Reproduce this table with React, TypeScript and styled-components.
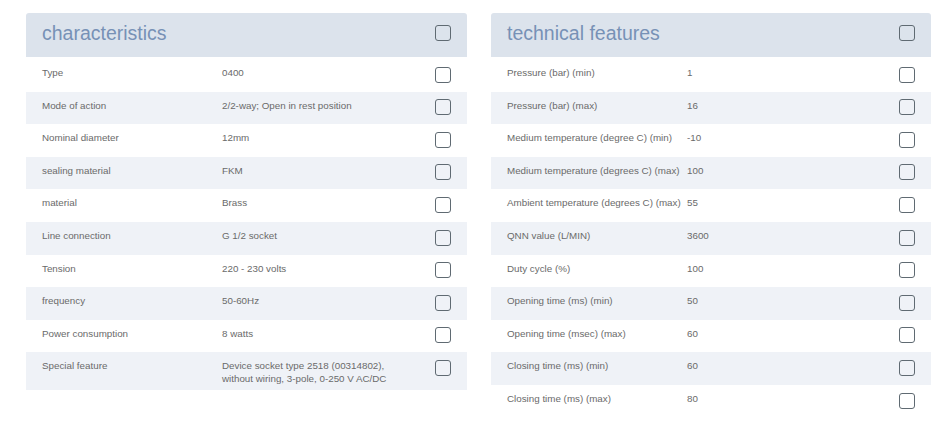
import React from "react";
import styled, { createGlobalStyle } from "styled-components";

const Global = createGlobalStyle`
  html, body { margin: 0; padding: 0; background: #ffffff; }
  body { font-family: "Liberation Sans", Arial, sans-serif; }
`;

const Page = styled.div`
  display: grid;
  grid-template-columns: 441px 440px;
  column-gap: 24px;
  align-items: start;
  padding: 13px 10px 0 26px;
`;

const Card = styled.section`
  display: flex;
  flex-direction: column;
`;

const Header = styled.header`
  display: flex;
  align-items: center;
  justify-content: space-between;
  height: 44px;
  box-sizing: border-box;
  padding: 0 16px 4px 16px;
  margin-bottom: 2px;
  background: #dce3ec;
  border-radius: 3px 3px 0 0;
`;

const Title = styled.h2`
  margin: 0;
  font-size: 19.5px;
  font-weight: 400;
  color: #7791b6;
`;

const Row = styled.div<{ $alt: boolean }>`
  display: grid;
  grid-template-columns: 180px 1fr 16px;
  align-items: start;
  padding: 7px 16px 5px;
  background: ${(p) => (p.$alt ? "#eff2f7" : "#ffffff")};
  font-size: 9.8px;
  line-height: 13px;
  color: #6a6a6a;
`;

const Label = styled.div``;

const Value = styled.div`
  padding-right: 30px;
`;

const Box = styled.span<{ $inRow?: boolean }>`
  display: block;
  width: 16px;
  height: 16px;
  box-sizing: border-box;
  border: 1.5px solid #5f6a72;
  border-radius: 3px;
  margin: ${(p) => (p.$inRow ? "0.6px 0 4px" : "0")};
`;

type Item = [string, string];

const characteristics: Item[] = [
  ["Type", "0400"],
  ["Mode of action", "2/2-way; Open in rest position"],
  ["Nominal diameter", "12mm"],
  ["sealing material", "FKM"],
  ["material", "Brass"],
  ["Line connection", "G 1/2 socket"],
  ["Tension", "220 - 230 volts"],
  ["frequency", "50-60Hz"],
  ["Power consumption", "8 watts"],
  ["Special feature", "Device socket type 2518 (00314802), without wiring, 3-pole, 0-250 V AC/DC"],
];

const technical: Item[] = [
  ["Pressure (bar) (min)", "1"],
  ["Pressure (bar) (max)", "16"],
  ["Medium temperature (degree C) (min)", "-10"],
  ["Medium temperature (degrees C) (max)", "100"],
  ["Ambient temperature (degrees C) (max)", "55"],
  ["QNN value (L/MIN)", "3600"],
  ["Duty cycle (%)", "100"],
  ["Opening time (ms) (min)", "50"],
  ["Opening time (msec) (max)", "60"],
  ["Closing time (ms) (min)", "60"],
  ["Closing time (ms) (max)", "80"],
];

function Table({ title, items }: { title: string; items: Item[] }) {
  return (
    <Card>
      <Header>
        <Title>{title}</Title>
        <Box />
      </Header>
      {items.map(([l, v], i) => (
        <Row key={l} $alt={i % 2 === 1}>
          <Label>{l}</Label>
          <Value>{v}</Value>
          <Box $inRow />
        </Row>
      ))}
    </Card>
  );
}

export default function App() {
  return (
    <>
      <Global />
      <Page>
        <Table title="characteristics" items={characteristics} />
        <Table title="technical features" items={technical} />
      </Page>
    </>
  );
}
